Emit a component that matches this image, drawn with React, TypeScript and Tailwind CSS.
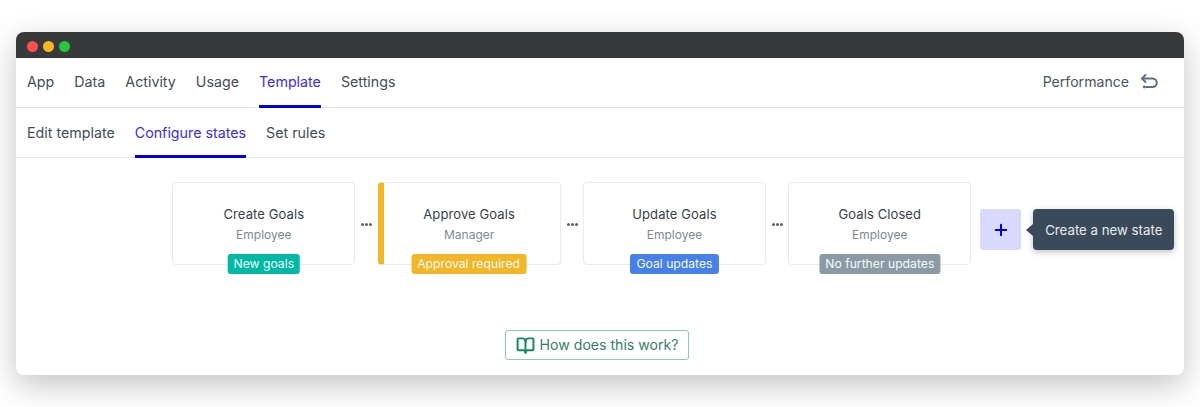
import { BookOpen, Plus } from "lucide-react";

const nav = ["App", "Data", "Activity", "Usage", "Template", "Settings"];
const sub = ["Edit template", "Configure states", "Set rules"];
const cards = [
  { title: "Create Goals", role: "Employee", tag: "New goals", tagClass: "bg-[#00b8a3]", bar: false },
  { title: "Approve Goals", role: "Manager", tag: "Approval required", tagClass: "bg-[#f2b626]", bar: true },
  { title: "Update Goals", role: "Employee", tag: "Goal updates", tagClass: "bg-[#4680e8]", bar: false },
  { title: "Goals Closed", role: "Employee", tag: "No further updates", tagClass: "bg-[#8c9aa5]", bar: false },
];

function Dots() {
  return (
    <div className="flex h-[83px] w-[22.33px] shrink-0 items-center justify-center gap-[1px] pt-[1px] pl-[1px]">
      <span className="h-[3px] w-[3px] rounded-full bg-[#5b6673]" />
      <span className="h-[3px] w-[3px] rounded-full bg-[#5b6673]" />
      <span className="h-[3px] w-[3px] rounded-full bg-[#5b6673]" />
    </div>
  );
}

function Card({ c }: { c: (typeof cards)[number] }) {
  return (
    <div
      className={`relative flex h-[83px] w-[183px] flex-col items-center rounded-[4px] border border-[#e8eaed] bg-white pt-[22px] ${c.bar ? "border-l-[6px] border-l-[#f2b626] pr-[5px]" : ""}`}
    >
      <div className="text-[13px] leading-[18px] tracking-[0.1px] text-[#3a4149]">{c.title}</div>
      <div className="mt-[2.5px] text-[12px] leading-[18px] text-[#7e8894]">{c.role}</div>
      <span
        className={`absolute top-[71px] left-1/2 -translate-x-1/2 rounded-[3px] px-[6px] text-[12.2px] leading-[20px] whitespace-nowrap text-[#f3fbfa] ${c.tagClass} ${c.bar ? "ml-[-3px]" : ""}`}
      >
        {c.tag}
      </span>
    </div>
  );
}

function BackIcon() {
  return (
    <svg width="18" height="18" viewBox="0 0 18 18" fill="none" stroke="#5f7182" strokeWidth="2" strokeLinecap="round" strokeLinejoin="round">
      <path d="M5.5 2 L2 5.5 L5.5 9" />
      <path d="M2 5.5 H12.5 a3.6 3.6 0 0 1 0 8.5 H6" />
      <circle cx="4.2" cy="14" r="1.4" fill="#5f7182" stroke="none" />
    </svg>
  );
}

export default function App() {
  return (
    <div className="h-[407px] w-[1200px] overflow-hidden bg-white pt-[32px] pl-[16px] font-['Inter',sans-serif]">
      <div className="w-[1168px] overflow-hidden rounded-[8px] bg-white shadow-[0_10px_32px_rgba(0,0,0,0.24)]">
        <div className="flex h-[26px] items-center gap-[5px] bg-[#38393b] pt-[2px] pl-[11px]">
          <span className="h-[11px] w-[11px] rounded-full bg-[#fb5050]" />
          <span className="h-[11px] w-[11px] rounded-full bg-[#fdb525]" />
          <span className="h-[11px] w-[11px] rounded-full bg-[#27c63f]" />
        </div>
        <div className="flex h-[50px] items-stretch justify-between border-b border-[#e3e6ec] pr-[26px] pl-[11px]">
          <div className="flex gap-[20px]">
            {nav.map((n) => (
              <div
                key={n}
                className={`mb-[-1px] flex items-center border-b-[3px] pt-[1px] text-[14.25px] ${n === "Template" ? "border-[#0000e0] text-[#3d2ee6]" : "border-transparent text-[#454c55]"}`}
              >
                {n}
              </div>
            ))}
          </div>
          <div className="flex items-center gap-[11px] pb-[1px] text-[14.1px] text-[#4a5460]">
            Performance
            <BackIcon />
          </div>
        </div>
        <div className="flex h-[50px] items-stretch gap-[20px] border-b border-[#e3e6ec] pl-[11px]">
          {sub.map((n) => (
            <div
              key={n}
              className={`mb-[-1px] flex items-center border-b-[3px] pt-[3px] text-[14.25px] ${n === "Configure states" ? "border-[#0000e0] text-[#3d2ee6]" : "border-transparent text-[#454c55]"}`}
            >
              {n}
            </div>
          ))}
        </div>
        <div className="flex h-[217px] flex-col items-start">
          <div className="mt-[24px] flex h-[83px] items-start pl-[156.3px]">
            <Card c={cards[0]} />
            <Dots />
            <Card c={cards[1]} />
            <Dots />
            <Card c={cards[2]} />
            <Dots />
            <Card c={cards[3]} />
            <div className="relative mt-[27px] ml-[9px] flex h-[41px] w-[41px] items-center justify-center rounded-[3px] bg-[#d9d9fd]">
              <Plus size={18} strokeWidth={2.75} className="text-[#0000e0]" />
              <div className="absolute top-0 left-[53px] flex h-[41px] w-[141px] items-center justify-center rounded-[4px] bg-[#3a4a5a] pt-[2px] text-[13.25px] whitespace-nowrap text-[#e8ecef] shadow-[0_2px_6px_rgba(0,0,0,0.25)]">
                <span className="absolute top-[15px] left-[-7px] h-0 w-0 border-y-[6px] border-r-[7px] border-y-transparent border-r-[#3a4a5a]" />
                Create a new state
              </div>
            </div>
          </div>
          <div className="mt-[65px] flex w-full justify-center pr-[6px]">
            <div className="flex h-[30px] w-[184px] items-center justify-center gap-[5px] rounded-[3px] border border-[#86cdb1] text-[14.1px] text-[#33806a]">
              <BookOpen size={19} strokeWidth={2.5} className="text-[#16885c]" />
              How does this work?
            </div>
          </div>
        </div>
      </div>
    </div>
  );
}
